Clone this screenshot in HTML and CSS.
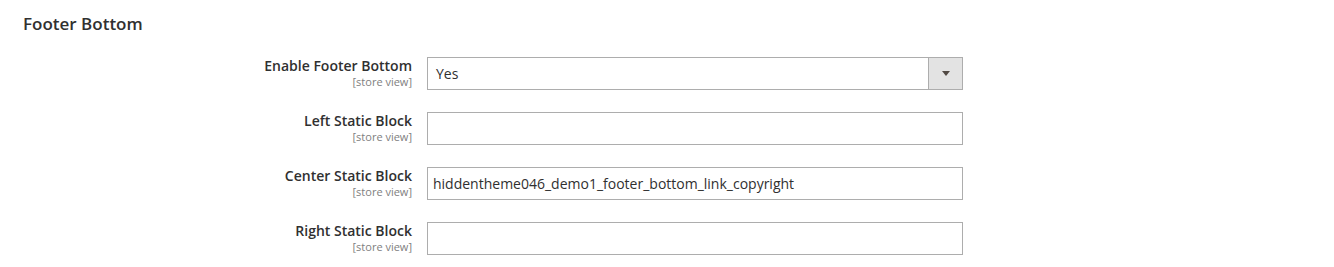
FILE: index.html
```html
<!DOCTYPE html>
<html lang="en">
<head>
    <meta charset="UTF-8">
    <title>Footer Bottom</title>
    <link rel="stylesheet" href="styles.css">
</head>
<body>
    <div class="section">
        <h2 class="section-title">Footer Bottom</h2>

        <div class="field-row">
            <div class="field-label">
                <span class="label-text">Enable Footer Bottom</span>
                <span class="scope">[store view]</span>
            </div>
            <div class="select-box">
                <span class="select-value">Yes</span>
                <span class="select-arrow"><span class="triangle"></span></span>
            </div>
        </div>

        <div class="field-row">
            <div class="field-label">
                <span class="label-text">Left Static Block</span>
                <span class="scope">[store view]</span>
            </div>
            <input type="text" class="text-input" value="">
        </div>

        <div class="field-row">
            <div class="field-label">
                <span class="label-text">Center Static Block</span>
                <span class="scope">[store view]</span>
            </div>
            <input type="text" class="text-input" value="hiddentheme046_demo1_footer_bottom_link_copyright">
        </div>

        <div class="field-row">
            <div class="field-label">
                <span class="label-text">Right Static Block</span>
                <span class="scope">[store view]</span>
            </div>
            <input type="text" class="text-input" value="">
        </div>
    </div>
</body>
</html>
```

FILE: styles.css
```css
* {
    margin: 0;
    padding: 0;
    box-sizing: border-box;
}

body {
    font-family: "Open Sans", Arial, sans-serif;
    background-color: #ffffff;
    color: #303030;
}

.section {
    padding: 12px 0 0 23px;
}

.section-title {
    font-size: 17px;
    font-weight: 600;
    line-height: 24px;
    color: #303030;
    margin-bottom: 21px;
}

.field-row {
    display: flex;
    align-items: flex-start;
    margin-bottom: 22px;
}

.field-label {
    width: 389px;
    display: flex;
    flex-direction: column;
    align-items: flex-end;
    margin-right: 15px;
}

.label-text {
    font-size: 14px;
    font-weight: 600;
    line-height: 18px;
    color: #303030;
}

.scope {
    font-size: 11px;
    line-height: 13px;
    color: #808080;
}

.select-box,
.text-input {
    width: 536px;
    height: 33px;
    border: 1px solid #adadad;
    background: #ffffff;
}

.select-box {
    display: flex;
    align-items: stretch;
}

.select-value {
    flex: 1;
    font-size: 14px;
    line-height: 31px;
    padding-left: 8px;
}

.select-arrow {
    width: 34px;
    background-color: #e3e3e3;
    border-left: 1px solid #adadad;
    display: flex;
    align-items: center;
    justify-content: center;
}

.triangle {
    width: 0;
    height: 0;
    border-left: 4px solid transparent;
    border-right: 4px solid transparent;
    border-top: 5px solid #514943;
}

.text-input {
    font-family: "Open Sans", Arial, sans-serif;
    font-size: 14px;
    color: #303030;
    padding: 0 5px;
    outline: none;
}
```
